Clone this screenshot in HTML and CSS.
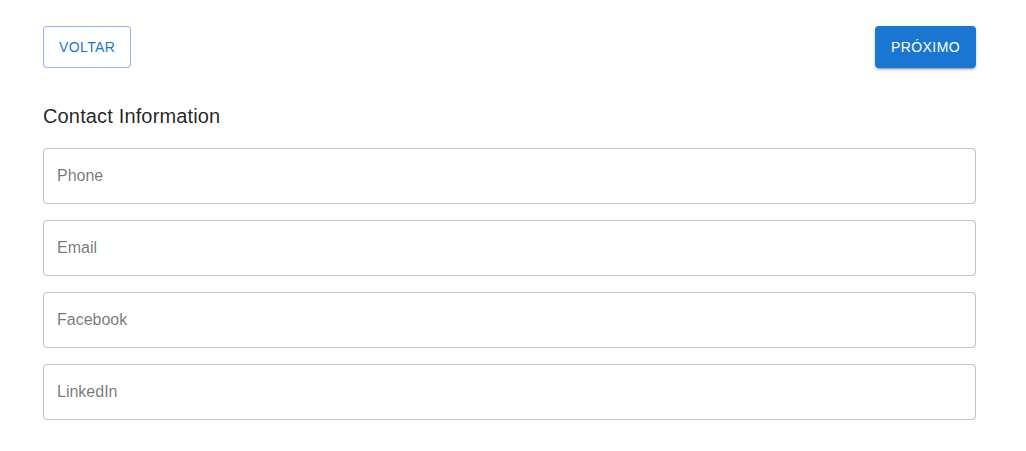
FILE: index.html
```html
<!DOCTYPE html>
<html lang="pt-BR">

<head>
    <meta charset="UTF-8">
    <meta name="viewport" content="width=device-width, initial-scale=1.0">
    <title>Contact Information</title>
    <link rel="stylesheet" href="styles.css">
</head>

<body>
    <div class="page">
        <div class="nav-buttons">
            <button class="btn btn-outlined">VOLTAR</button>
            <button class="btn btn-contained">PRÓXIMO</button>
        </div>

        <h2 class="section-title">Contact Information</h2>

        <form class="contact-form">
            <input type="tel" class="field" placeholder="Phone">
            <input type="email" class="field" placeholder="Email">
            <input type="text" class="field" placeholder="Facebook">
            <input type="text" class="field" placeholder="LinkedIn">
        </form>
    </div>
</body>

</html>
```

FILE: styles.css
```css
body {
    font-family: "Liberation Sans", Arial, sans-serif;
    margin: 0;
    background-color: #fff;
    color: rgba(0, 0, 0, 0.87);
}

.page {
    padding: 26px 50px 0 43px;
}

.nav-buttons {
    display: flex;
    justify-content: space-between;
}

.btn {
    font-family: inherit;
    font-size: 14px;
    letter-spacing: 0.4px;
    height: 42px;
    padding: 0 15px;
    border-radius: 4px;
    cursor: pointer;
}

.btn-outlined {
    background: #fff;
    color: #1976d2;
    border: 1px solid rgba(25, 118, 210, 0.5);
}

.btn-contained {
    background: #1976d2;
    color: #fff;
    border: none;
    padding: 0 16px;
    box-shadow: 0 3px 1px -2px rgba(0, 0, 0, 0.2), 0 2px 2px 0 rgba(0, 0, 0, 0.14), 0 1px 5px 0 rgba(0, 0, 0, 0.12);
}

.section-title {
    font-size: 20px;
    font-weight: 400;
    letter-spacing: 0.15px;
    line-height: 32px;
    margin: 32px 0 16px;
}

.contact-form {
    display: flex;
    flex-direction: column;
    gap: 16px;
}

.field {
    font-family: inherit;
    font-size: 16px;
    height: 56px;
    box-sizing: border-box;
    padding: 0 13px;
    border: 1px solid rgba(0, 0, 0, 0.23);
    border-radius: 4px;
    margin: 0;
    color: rgba(0, 0, 0, 0.87);
}

.field::placeholder {
    color: rgba(0, 0, 0, 0.55);
}
```
